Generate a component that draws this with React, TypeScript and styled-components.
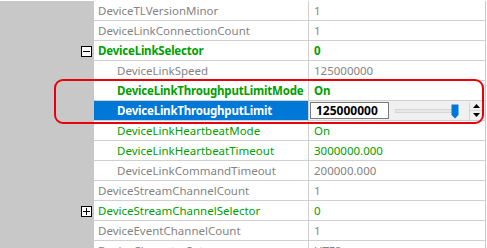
import styled, { createGlobalStyle } from "styled-components";

const GlobalStyle = createGlobalStyle`
  html, body {
    margin: 0;
    padding: 0;
    background: #ffffff;
    overflow: hidden;
  }
  body {
    font-family: "Noto Sans", "Segoe UI", sans-serif;
    font-size: 11.5px;
  }
`;

const Frame = styled.div`
  position: relative;
  width: 487px;
  height: 248px;
  overflow: hidden;
  background: #ffffff;
`;

const Grid = styled.div`
  display: flex;
  flex-direction: column;
  padding-top: 1px;
  width: 486px;
`;

const Row = styled.div`
  display: grid;
  grid-template-columns: 94px 215px 1fr;
  height: 20px;
`;

const Gutter = styled.div`
  background: #c8c8c8;
  display: flex;
  align-items: center;
  justify-content: flex-end;
  padding-right: 1px;
`;

type Tone = "gray" | "green" | "selected";

const colorFor = (tone: Tone) =>
  tone === "green" ? "#00a000" : tone === "selected" ? "#ffffff" : "#848484";

const NameCell = styled.div<{ $tone: Tone; $bold?: boolean; $level: number }>`
  display: flex;
  align-items: center;
  padding-left: ${(p) => 4 + p.$level * 19}px;
  border-bottom: 1px solid #d0d0d0;
  border-right: 1px solid #d0d0d0;
  background: ${(p) => (p.$tone === "selected" ? "#0078d7" : "#ffffff")};
  color: ${(p) => colorFor(p.$tone)};
  font-weight: ${(p) => (p.$bold ? 700 : 400)};
  letter-spacing: ${(p) => (p.$bold ? "-0.2px" : "0")};
  white-space: nowrap;
  overflow: hidden;
`;

const ValueCell = styled.div<{ $tone: Tone; $bold?: boolean; $editing?: boolean }>`
  display: flex;
  align-items: center;
  padding-left: ${(p) => (p.$editing ? 1 : 5)}px;
  border-bottom: 1px solid #d0d0d0;
  border-right: 1px solid #c8c8c8;
  background: ${(p) => (p.$editing ? "#f0f0f0" : "#ffffff")};
  color: ${(p) => colorFor(p.$tone)};
  font-weight: ${(p) => (p.$bold ? 700 : 400)};
  white-space: nowrap;
  overflow: hidden;
`;

const Expander = styled.div`
  width: 9px;
  height: 9px;
  border: 1px solid #000000;
  background: #ffffff;
  position: relative;
  margin-right: 1px;

  &::before,
  &::after {
    content: "";
    position: absolute;
    background: #000000;
  }
  &::before {
    left: 1px;
    right: 1px;
    top: 4px;
    height: 1px;
  }
`;

const PlusExpander = styled(Expander)`
  &::after {
    top: 1px;
    bottom: 1px;
    left: 4px;
    width: 1px;
  }
`;

const Editor = styled.div`
  display: flex;
  align-items: center;
  width: 100%;
  height: 100%;
`;

const TextBox = styled.div`
  width: 72px;
  height: 15px;
  border: 1px solid #7a7a7a;
  background: #ffffff;
  color: #000000;
  font-weight: 700;
  font-size: 12px;
  padding-left: 5px;
  display: flex;
  align-items: center;
`;

const Slider = styled.div`
  position: relative;
  width: 64px;
  height: 18px;
  margin-left: 6px;
  flex: none;
`;

const Track = styled.div`
  position: absolute;
  left: 0;
  right: 2px;
  top: 7px;
  height: 2px;
  background: #e7e7e7;
  border: 1px solid #d6d6d6;
`;

const Thumb = styled.svg`
  position: absolute;
  right: 0;
  top: 2px;
`;

const Spin = styled.div`
  display: flex;
  flex-direction: column;
  margin-left: auto;
  margin-right: 2px;
  width: 13px;
  height: 18px;
  border-left: 1px solid #d6d6d6;
`;

const SpinButton = styled.div`
  flex: 1;
  display: flex;
  align-items: center;
  justify-content: center;
  border-bottom: 1px solid #d6d6d6;

  &:last-child {
    border-bottom: none;
  }
`;

const Highlight = styled.div`
  position: absolute;
  left: 54px;
  top: 79px;
  width: 426px;
  height: 41px;
  border: 2px solid #e8000b;
  border-radius: 9px;
  pointer-events: none;
`;

type Prop = {
  name: string;
  value?: string;
  level: number;
  tone: Tone;
  bold?: boolean;
  expander?: "minus" | "plus";
  editing?: boolean;
};

const rows: Prop[] = [
  { name: "DeviceTLVersionMinor", value: "1", level: 0, tone: "gray" },
  { name: "DeviceLinkConnectionCount", value: "1", level: 0, tone: "gray" },
  { name: "DeviceLinkSelector", value: "0", level: 0, tone: "green", bold: true, expander: "minus" },
  { name: "DeviceLinkSpeed", value: "125000000", level: 1, tone: "gray" },
  { name: "DeviceLinkThroughputLimitMode", value: "On", level: 1, tone: "green", bold: true },
  { name: "DeviceLinkThroughputLimit", level: 1, tone: "selected", bold: true, editing: true },
  { name: "DeviceLinkHeartbeatMode", value: "On", level: 1, tone: "green" },
  { name: "DeviceLinkHeartbeatTimeout", value: "3000000.000", level: 1, tone: "green" },
  { name: "DeviceLinkCommandTimeout", value: "200000.000", level: 1, tone: "gray" },
  { name: "DeviceStreamChannelCount", value: "1", level: 0, tone: "gray" },
  { name: "DeviceStreamChannelSelector", value: "0", level: 0, tone: "green", expander: "plus" },
  { name: "DeviceEventChannelCount", value: "1", level: 0, tone: "gray" },
  { name: "DeviceCharacterSet", value: "UTF8", level: 0, tone: "gray" },
];

function ValueEditor() {
  return (
    <Editor>
      <TextBox>125000000</TextBox>
      <Slider>
        <Track />
        <Thumb width="8" height="15" viewBox="0 0 8 15">
          <path d="M0.5 0.5 H7.5 V11 L4 14.5 L0.5 11 Z" fill="#0078d7" />
        </Thumb>
      </Slider>
      <Spin>
        <SpinButton>
          <svg width="7" height="4" viewBox="0 0 7 4">
            <path d="M0 4 L3.5 0 L7 4 Z" fill="#000" />
          </svg>
        </SpinButton>
        <SpinButton>
          <svg width="7" height="4" viewBox="0 0 7 4">
            <path d="M0 0 L3.5 4 L7 0 Z" fill="#000" />
          </svg>
        </SpinButton>
      </Spin>
    </Editor>
  );
}

export default function App() {
  return (
    <Frame>
      <GlobalStyle />
      <Grid>
        {rows.map((r) => (
          <Row key={r.name}>
            <Gutter>
              {r.expander === "minus" && <Expander />}
              {r.expander === "plus" && <PlusExpander />}
            </Gutter>
            <NameCell $tone={r.tone} $bold={r.bold} $level={r.level}>
              {r.name}
            </NameCell>
            <ValueCell
              $tone={r.tone === "selected" ? "gray" : r.tone}
              $bold={r.bold}
              $editing={r.editing}
            >
              {r.editing ? <ValueEditor /> : r.value}
            </ValueCell>
          </Row>
        ))}
      </Grid>
      <Highlight />
    </Frame>
  );
}
